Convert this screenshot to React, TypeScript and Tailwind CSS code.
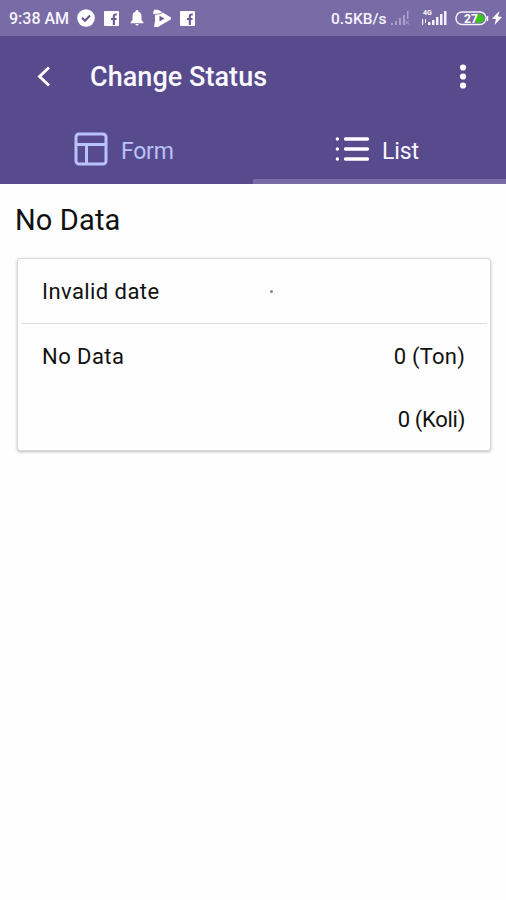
function FacebookIcon() {
  return (
    <svg className="block h-[15px] w-[15px]" viewBox="0 0 15 15">
      <rect width="15" height="15" rx="1" fill="#fff" />
      <path d="M8.800 14V9H7V7h1.800V5.500c0-2 1-2.900 2.900-2.900h1.100v1.800h-.8c-.8 0-1.100.4-1.100 1.100V7h1.800l-.3 2h-1.500v5z" fill="#695b99" />
    </svg>
  );
}

function StatusBar() {
  return (
    <div className="flex h-9 items-center bg-[#786ba6] text-[16px] font-medium text-[#f7f4ff]">
      <span className="mt-px ml-[9px] w-[68px] whitespace-nowrap">9:38 AM</span>
      <svg className="block h-[18px] w-[18px]" viewBox="0 0 18 18">
        <circle cx="9" cy="9" r="8.800" fill="#fff" />
        <path d="m5 8.800 3 3L13 6.500" fill="none" stroke="#62558f" strokeWidth="2" />
      </svg>
      <div className="ml-[9px]"><FacebookIcon /></div>
      <svg className="ml-[11px] block h-[16px] w-[14px]" viewBox="0 0 14 16">
        <path d="M7 0a1.300 1.300 0 0 1 1.300 1.500C10.600 2.100 11.500 4 11.500 6.500V10l2 2.500v.8H.5v-.8l2-2.500V6.500C2.500 4 3.400 2.100 5.700 1.500A1.300 1.300 0 0 1 7 0ZM5.400 14h3.200a1.600 1.600 0 0 1-3.200 0Z" fill="#fff" />
      </svg>
      <svg className="ml-[9px] block h-[19px] w-[19px]" viewBox="0 0 19 19">
        <path d="M1 .8h4L18 8.500v1.800L5 18H1l1-6V6L0 4.500z" fill="#fff" />
        <path d="m6.500 6.800 5 2.700-5 3z" fill="#695b99" />
        <path d="M0 5.500 6 5l4-1.500" fill="none" stroke="#8679ae" strokeWidth=".9" />
      </svg>
      <div className="ml-[8px]"><FacebookIcon /></div>
      <span className="mt-[3px] ml-auto w-[60px] whitespace-nowrap text-[15.500px]">0.5KB/s</span>
      <svg className="block h-[16px] w-[19px]" viewBox="0 0 19 16">
        <path d="M0 15v-2h2v2zm4 0v-4h2v4zm4 0V8h2v7zm4 0V5h2v10zm4-6V1h1.500v8z" fill="#aaa0c8" />
        <path d="m14.500 10.500 3.500 4m0-4-3.500 4" stroke="#aaa0c8" />
      </svg>
      <svg className="ml-[11px] block h-[18px] w-[28px]" viewBox="0 0 28 18">
        <path d="M7 16v-3h2.500v3zm4 0v-5h2.500v5zm4 0V8h2.500v8zm4 0V5h2.500v11zm4 0V2h2.500v14zM1 10h1.200v6H1zm3 0h1v4H4z" fill="#f4f0ff" />
        <text x="2" y="6" fontSize="7" fontWeight="700" fill="#fff">4G</text>
      </svg>
      <svg className="ml-[6px] block h-[16px] w-[34px]" viewBox="0 0 34 16">
        <rect x="1" y="2" width="30" height="12.500" rx="6" fill="none" stroke="#f6f2ff" strokeWidth="1.500" />
        <path d="M21 4h3c7 0 7 9 0 9h-3z" fill="#38c51d" />
        <path d="M32.500 6v5" stroke="#f6f2ff" strokeWidth="1.500" />
        <text x="9" y="12.500" fontSize="12" fontWeight="700" fill="#fff">27</text>
      </svg>
      <svg className="mr-[4px] ml-[3px] block h-[14px] w-[10px]" viewBox="0 0 10 14">
        <path d="M7.500 0 0 7.500l4 .7L2.500 14 10 6l-4-.6z" fill="#fff" />
      </svg>
    </div>
  );
}

export default function App() {
  return (
    <div className="h-[900px] w-[506px] overflow-hidden bg-[#fefefe] font-['Roboto',sans-serif] text-[#111]">
      <StatusBar />
      <header className="h-[148px] bg-[#574b8d]">
        <div className="flex h-[81px] items-center">
          <svg className="ml-[37px] block h-[22px] w-[14px]" viewBox="0 0 14 22">
            <path d="m12 1.500-9.500 9 9.500 9" fill="none" stroke="#fff" strokeWidth="2.900" />
          </svg>
          <h1 className="mt-[2px] ml-[39px] whitespace-nowrap text-[27px] font-medium tracking-[0.05px] text-[#faf8ff]">Change Status</h1>
          <svg className="mr-[39px] ml-auto block h-[26px] w-[8px]" viewBox="0 0 8 26" fill="#fff">
            <circle cx="4" cy="3.500" r="3.100" /><circle cx="4" cy="12.500" r="3.100" /><circle cx="4" cy="21.500" r="3.100" />
          </svg>
        </div>
        <nav className="grid h-[67px] grid-cols-2">
          <button className="flex items-center pl-[74px] text-[#b9c2fa]">
            <svg className="-mt-[3px] block h-[34px] w-[34px]" viewBox="0 0 34 34" fill="none" stroke="currentColor" strokeWidth="3">
              <rect x="2" y="2" width="30" height="30" rx="3" /><path d="M2 12.500h30M12.500 12.500V32" />
            </svg>
            <span className="mt-[3px] ml-[13px] text-[23px] tracking-[-0.25px]">Form</span>
          </button>
          <button className="flex items-center border-b-[5px] border-[#786ba6] pt-[5px] pl-[82px] text-[#f8f5ff]">
            <svg className="-mt-[3px] block h-[26px] w-[35px]" viewBox="0 0 35 26" fill="none" stroke="#fff" strokeWidth="3.300" strokeLinecap="round">
              <path d="M10.500 3h22M10.500 13h22M10.500 23h22" />
              <path d="M2.300 3h.1M2.300 13h.1M2.300 23h.1" />
            </svg>
            <span className="mt-[3px] ml-[12px] text-[23px] tracking-[-0.1px]">List</span>
          </button>
        </nav>
      </header>
      <main className="pr-[15px] pl-[17px]">
        <h2 className="-ml-[2px] h-[74px] pt-[15px] text-[29px] leading-[43px] tracking-[0.15px]">No Data</h2>
        <section className="h-[193px] rounded-[3px] border border-[#d9d9d9] bg-[#fefefe] text-[22px] shadow-[0_1px_3px_#bbb]">
          <div className="mx-[3px] grid h-[65px] grid-cols-[228px_1fr] items-center border-b border-[#dedede] pl-[21px]">
            <span className="pt-px tracking-[0.43px]">Invalid date</span>
            <span className="size-[3px] rounded-full bg-[#888]" />
          </div>
          <div className="flex h-[65px] items-center justify-between pr-[25px] pl-[24px]">
            <span className="tracking-[0.45px]">No Data</span><span className="tracking-[0.2px]">0 (Ton)</span>
          </div>
          <div className="flex h-[61px] items-center justify-end pr-[25px] tracking-[-0.3px]">0 (Koli)</div>
        </section>
      </main>
    </div>
  );
}
